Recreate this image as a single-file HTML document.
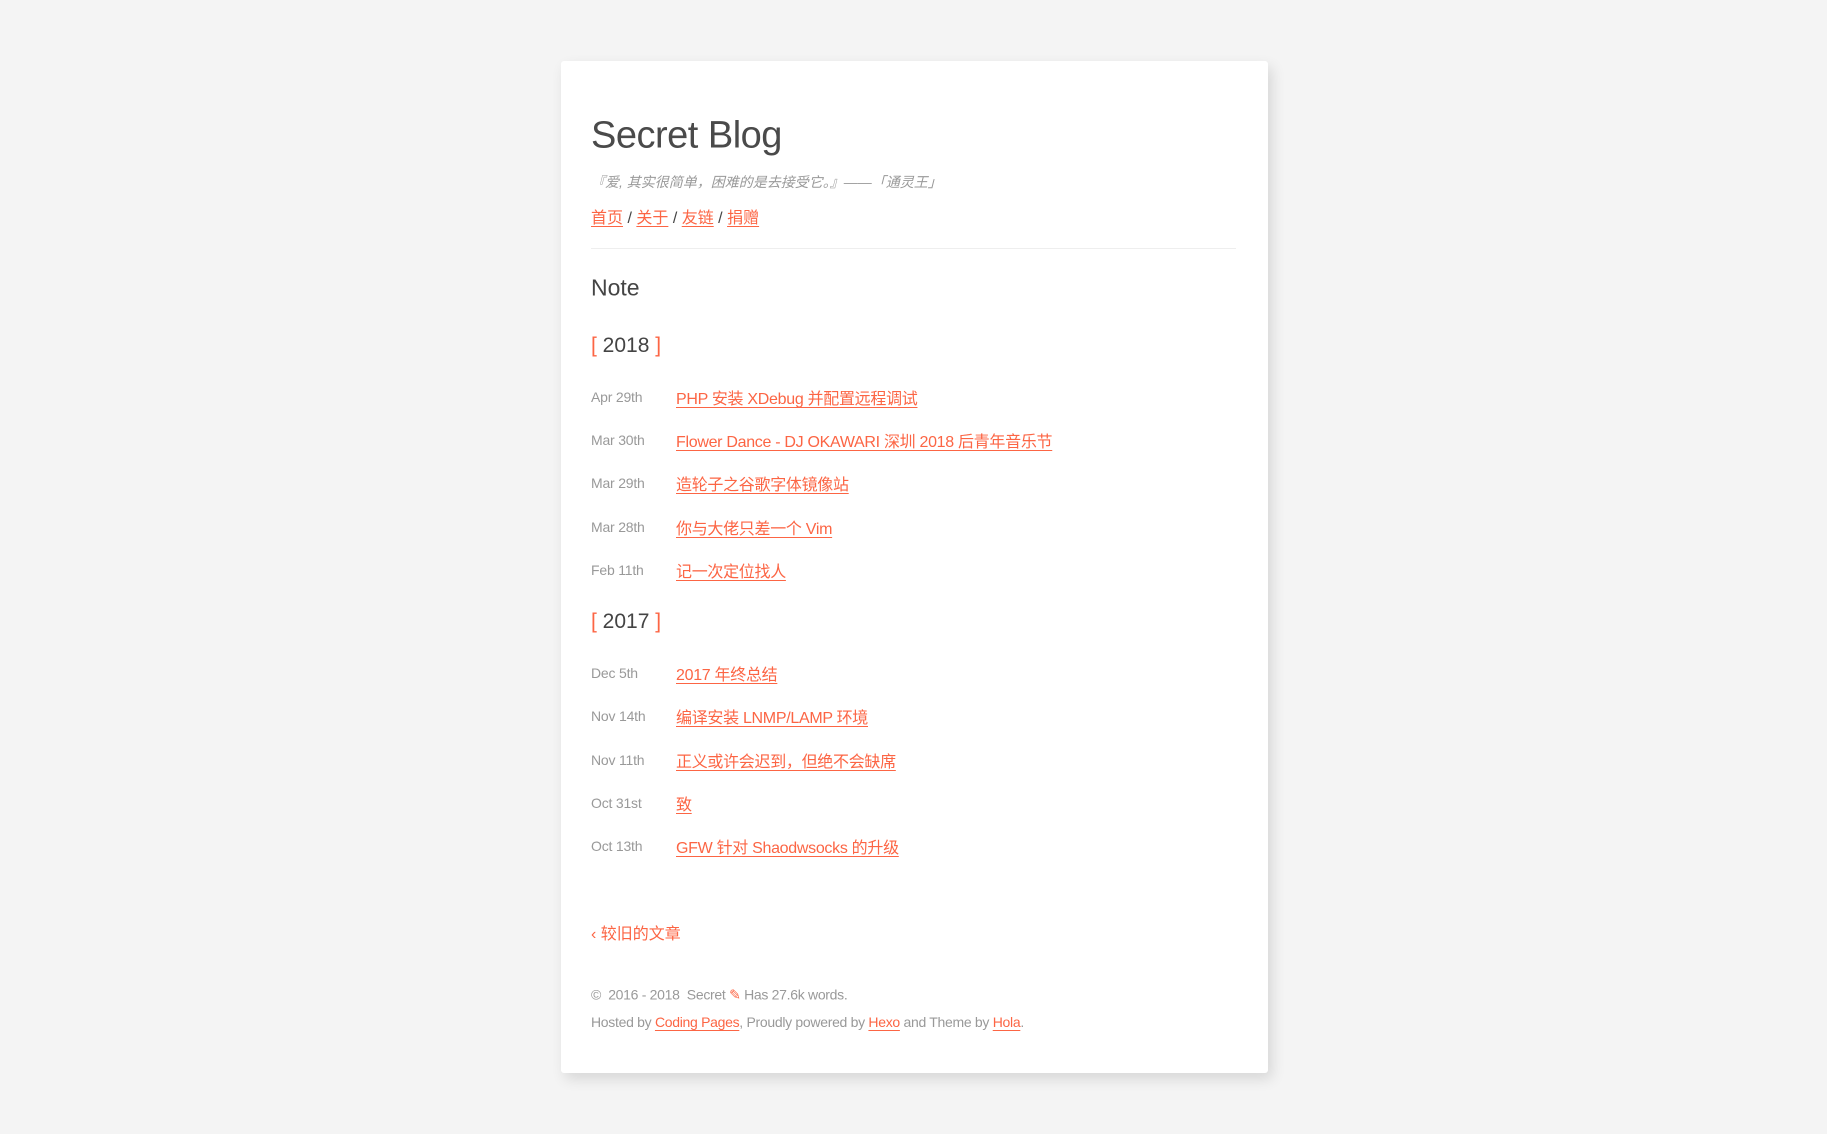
<!DOCTYPE html>
<html><head><meta charset="utf-8"><style>
body{margin:0;background:#f4f4f4;width:1827px;height:1134px;position:relative;font-family:"Liberation Sans","Noto Sans CJK SC",sans-serif;overflow:hidden}
.card{position:absolute;left:561px;top:61px;width:707px;height:1012px;background:#fff;border-radius:3px;box-shadow:4px 6px 14px rgba(0,0,0,.12)}
.a{position:absolute;left:591px;white-space:nowrap}
a{color:#fc6544;text-decoration:underline;text-underline-offset:3px}
.t{transform:translateY(-50%)}
.d{color:#999;font-size:14px;letter-spacing:-.2px}
.l{left:676px;font-size:16px;letter-spacing:-.3px}
.y{font-size:21px;color:#444}
.y b{color:#fc6544;font-weight:normal}
</style></head><body>
<div class="card"></div>
<div class="a t" style="top:136px;font-size:38px;color:#4a4a4a;letter-spacing:-.5px">Secret Blog</div>
<div class="a t" style="top:182px;font-size:14px;color:#999;font-style:italic">『爱, 其实很简单，困难的是去接受它。』——「通灵王」</div>
<div class="a t" style="top:216px;font-size:16px;color:#444"><a>首页</a> / <a>关于</a> / <a>友链</a> / <a>捐赠</a></div>
<div style="position:absolute;left:591px;top:248px;width:645px;height:1px;background:#eee"></div>
<div class="a t" style="top:288px;font-size:23px;color:#444">Note</div>
<div class="a t y" style="top:346px"><b>[</b> 2018 <b>]</b></div>
<div class="a t d" style="top:397px">Apr 29th</div><div class="a t l" style="top:397px"><a>PHP 安装 XDebug 并配置远程调试</a></div>
<div class="a t d" style="top:440px">Mar 30th</div><div class="a t l" style="top:440px"><a>Flower Dance - DJ OKAWARI 深圳 2018 后青年音乐节</a></div>
<div class="a t d" style="top:483px">Mar 29th</div><div class="a t l" style="top:483px"><a>造轮子之谷歌字体镜像站</a></div>
<div class="a t d" style="top:527px">Mar 28th</div><div class="a t l" style="top:527px"><a>你与大佬只差一个 Vim</a></div>
<div class="a t d" style="top:570px">Feb 11th</div><div class="a t l" style="top:570px"><a>记一次定位找人</a></div>
<div class="a t y" style="top:622px"><b>[</b> 2017 <b>]</b></div>
<div class="a t d" style="top:673px">Dec 5th</div><div class="a t l" style="top:673px"><a>2017 年终总结</a></div>
<div class="a t d" style="top:716px">Nov 14th</div><div class="a t l" style="top:716px"><a>编译安装 LNMP/LAMP 环境</a></div>
<div class="a t d" style="top:760px">Nov 11th</div><div class="a t l" style="top:760px"><a>正义或许会迟到，但绝不会缺席</a></div>
<div class="a t d" style="top:803px">Oct 31st</div><div class="a t l" style="top:803px"><a>致</a></div>
<div class="a t d" style="top:846px">Oct 13th</div><div class="a t l" style="top:846px"><a>GFW 针对 Shaodwsocks 的升级</a></div>
<div class="a t" style="top:932px;font-size:16px;color:#fc6544">‹ 较旧的文章</div>
<div class="a t" style="top:995px;font-size:14px;color:#999;letter-spacing:-.3px">©&nbsp; 2016 - 2018&nbsp; Secret <span style="color:#fc6544">✎</span> Has 27.6k words.</div>
<div class="a t" style="top:1022px;font-size:14px;color:#999;letter-spacing:-.3px">Hosted by <a>Coding Pages</a>, Proudly powered by <a>Hexo</a> and Theme by <a>Hola</a>.</div>
</body></html>
